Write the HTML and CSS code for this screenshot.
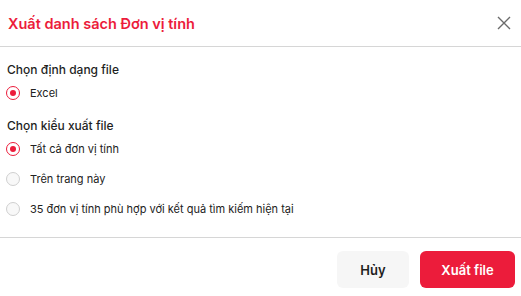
FILE: index.html
```html
<!DOCTYPE html>
<html lang="vi">
<head>
  <meta charset="UTF-8">
  <title>Xuất danh sách Đơn vị tính</title>
  <link rel="stylesheet" href="styles.css">
</head>
<body>

  <div class="modal">
    <div class="modal-header">
      <h2 class="modal-title">Xuất danh sách Đơn vị tính</h2>
      <button class="close-btn" aria-label="Đóng">
        <svg width="14" height="14" viewBox="0 0 14 14">
          <path d="M1 1L13 13M13 1L1 13" stroke="#6b6b6b" stroke-width="1.4" fill="none"/>
        </svg>
      </button>
    </div>

    <div class="modal-body">
      <div class="group">
        <div class="group-label">Chọn định dạng file</div>
        <label class="option"><span class="radio checked"></span>Excel</label>
      </div>
      <div class="group">
        <div class="group-label">Chọn kiểu xuất file</div>
        <label class="option"><span class="radio checked"></span>Tất cả đơn vị tính</label>
        <label class="option"><span class="radio"></span>Trên trang này</label>
        <label class="option"><span class="radio"></span>35 đơn vị tính phù hợp với kết quả tìm kiếm hiện tại</label>
      </div>
    </div>

    <div class="modal-footer">
      <button class="btn btn-cancel">Hủy</button>
      <button class="btn btn-primary">Xuất file</button>
    </div>
  </div>

</body>
</html>
```

FILE: styles.css
```css
html, body {
  margin: 0px;
  padding: 0px;
  background: #ffffff;
}
body {
  font-family: Inter, "Noto Sans", sans-serif;
  color: #1f1f1f;
}
.modal {
  width: 521px;
  height: 296px;
  display: flex;
  flex-direction: column;
}
.modal-header {
  display: flex;
  align-items: center;
  justify-content: space-between;
  height: 46px;
  padding: 0 10px 0 8px;
  border-bottom: 1px solid #d6d6d6;
}
.modal-title {
  margin: 0;
  font-size: 14.5px;
  font-weight: 600;
  color: #ec1c3b;
}
.close-btn {
  border: none;
  background: none;
  padding: 0;
  width: 14px;
  height: 14px;
  cursor: pointer;
}
.modal-body {
  flex: 1;
  padding: 15px 6px 0 6px;
  border-bottom: 1px solid #d6d6d6;
}
.group {
  margin-bottom: 10px;
}
.group-label {
  font-size: 12px;
  font-weight: 500;
  line-height: 16px;
  padding-left: 1px;
}
.option {
  display: flex;
  align-items: center;
  height: 30px;
  font-size: 11px;
  color: #222;
}
.radio {
  box-sizing: border-box;
  width: 14px;
  height: 14px;
  border-radius: 50%;
  border: 1px solid #cfcfcf;
  background: #f8f8f8;
  margin-right: 10px;
  position: relative;
}
.radio.checked {
  border: 1.5px solid #ec1c3b;
  background: #fff;
}
.radio.checked::after {
  content: "";
  position: absolute;
  left: 50%;
  top: 50%;
  width: 6px;
  height: 6px;
  margin: -3px 0 0 -3px;
  border-radius: 50%;
  background: #ec1c3b;
}
.modal-footer {
  display: flex;
  justify-content: flex-end;
  gap: 11px;
  padding: 13px 6px 8px 0;
}
.btn {
  height: 37px;
  border: none;
  border-radius: 6px;
  font-family: Inter, "Noto Sans", sans-serif;
  font-size: 13px;
  font-weight: 600;
  cursor: pointer;
}
.btn-cancel {
  width: 72px;
  background: #f6f6f6;
  color: #1f1f1f;
}
.btn-primary {
  width: 95px;
  background: #ec1c3b;
  color: #fff;
}
```
